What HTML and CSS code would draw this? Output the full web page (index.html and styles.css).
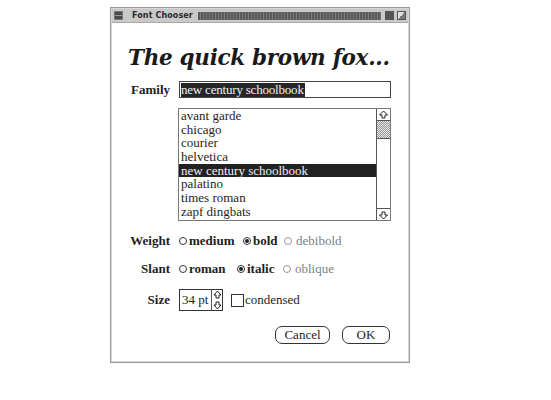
FILE: index.html
```html
<!DOCTYPE html>
<html>
<head>
<meta charset="utf-8">
<link rel="stylesheet" href="styles.css">
</head>
<body>
<div class="window">
  <div class="titlebar">
    <span class="tb-icon"></span>
    <span class="tb-title">Font Chooser</span>
    <span class="tb-stripe"></span>
    <span class="tb-btn tb-min"></span>
    <span class="tb-btn tb-max"></span>
  </div>
  <div class="content">
    <h1 class="sample">The quick brown fox...</h1>
    <div class="row family-row">
      <span class="label">Family</span>
      <div class="field"><span class="sel">new century schoolbook</span></div>
    </div>
    <div class="listbox">
      <ul class="items">
        <li>avant garde</li>
        <li>chicago</li>
        <li>courier</li>
        <li>helvetica</li>
        <li class="active">new century schoolbook</li>
        <li>palatino</li>
        <li>times roman</li>
        <li>zapf dingbats</li>
      </ul>
      <div class="scrollbar">
        <span class="arrow up"><svg width="11" height="10" viewBox="0 0 11 10"><path d="M5.5 1 L9.5 5 H7 V8 H4 V5 H1.5 Z" fill="none" stroke="#222" stroke-width="1"/></svg></span>
        <span class="thumb"></span>
        <span class="track"></span>
        <span class="arrow down"><svg width="11" height="10" viewBox="0 0 11 10"><path d="M5.5 9 L9.5 5 H7 V2 H4 V5 H1.5 Z" fill="none" stroke="#222" stroke-width="1"/></svg></span>
      </div>
    </div>
    <div class="row opt-row weight-row">
      <span class="label">Weight</span>
      <span class="opt opt-medium"><span class="radio"></span>medium</span>
      <span class="opt opt-bold"><span class="radio on"></span>bold</span>
      <span class="opt dim"><span class="radio"></span>debibold</span>
    </div>
    <div class="row opt-row slant-row">
      <span class="label">Slant</span>
      <span class="opt opt-roman"><span class="radio"></span>roman</span>
      <span class="opt opt-italic"><span class="radio on"></span>italic</span>
      <span class="opt dim"><span class="radio"></span>oblique</span>
    </div>
    <div class="row size-row">
      <span class="label">Size</span>
      <div class="sizebox">
        <span class="sizeval">34 pt</span>
        <span class="spin">
          <svg width="9" height="20" viewBox="0 0 9 20"><path d="M4.5 1 L8 5 H6 V8 H3 V5 H1 Z" fill="none" stroke="#222"/><path d="M4.5 19 L8 15 H6 V12 H3 V15 H1 Z" fill="none" stroke="#222"/></svg>
        </span>
      </div>
      <span class="check"></span><span class="checklabel">condensed</span>
    </div>
    <div class="buttons">
      <span class="btn cancel">Cancel</span>
      <span class="btn ok">OK</span>
    </div>
  </div>
</div>
</body>
</html>
```
FILE: styles.css
```css
html, body { margin: 0; padding: 0; background: #fff; }
body {
  width: 551px; height: 400px; overflow: hidden;
  font-family: "Liberation Serif", "DejaVu Serif", serif;
  color: #1e1e1e;
}
.window {
  margin: 7px 0 0 110px;
  width: 298px;
  height: 354px;
  border: 1px solid #9a9a9a;
  box-shadow: inset 0 0 0 1px #d6d6d6;
  display: flex; flex-direction: column;
}
.titlebar {
  height: 13px;
  margin: 1px 1px 0 1px;
  background: #c9c9c9;
  display: flex; align-items: center;
  border-bottom: 1px solid #a8a8a8;
}
.tb-icon {
  width: 9px; height: 9px; margin-left: 2px;
  background: #4a4a4a;
  box-shadow: inset 0 0 0 1px #777;
  background-image: linear-gradient(#4a4a4a 40%, #999 40%, #999 55%, #4a4a4a 55%);
}
.tb-title {
  font-family: "DejaVu Sans", sans-serif; font-weight: bold; font-size: 8px;
  color: #2a2a2a; margin-left: 9px; letter-spacing: 0.1px;
}
.tb-stripe {
  flex: 1; height: 8px; margin: 0 4px 0 5px;
  background: repeating-linear-gradient(90deg, #5a5a5a 0 2px, #777 2px 3px);
}
.tb-btn { width: 9px; height: 9px; margin-right: 3px; background: #e3e3e3; border: 1px solid #555; box-sizing: border-box; }
.tb-min { background: #555; }
.tb-max { margin-right: 2px; background: linear-gradient(135deg, #ddd 50%, #777 50%); }

.content { display: flex; flex-direction: column; }
.sample {
  margin: 22px 0 0 17px;
  font-family: "DejaVu Serif", serif; font-weight: bold; font-style: italic;
  font-size: 21.5px; line-height: 26px; letter-spacing: -0.3px;
  color: #1a1a1a; white-space: nowrap;
}
.row { display: flex; align-items: center; }
.label {
  width: 59px; text-align: right; font-weight: bold; font-size: 13px;
  padding-right: 9px; box-sizing: content-box;
}
.family-row { margin-top: 10px; height: 17px; }
.field {
  width: 209px; height: 15px; border: 1px solid #444;
  display: flex; align-items: center; padding-left: 1px;
  font-size: 13px;
}
.sel { background: #262626; color: #eee; line-height: 14px; padding-right: 1px; letter-spacing: -0.2px; }
.listbox {
  margin: 10px 0 0 67px; width: 211px; height: 111px;
  border: 1px solid #777; display: flex;
}
.items { list-style: none; margin: 0; padding: 0; flex: 1; font-size: 13px; line-height: 13.7px; }
.items li { padding-left: 2px; height: 13.7px; }
.items li.active { background: #222; color: #eee; }
.scrollbar { width: 13px; border-left: 1px solid #555; display: flex; flex-direction: column; }
.arrow { height: 11px; display: flex; align-items: center; justify-content: center; }
.arrow.up { border-bottom: 1px solid #555; }
.arrow.down { border-top: 1px solid #555; }
.thumb { height: 17px; background: repeating-conic-gradient(#999 0 25%, #e6e6e6 0 50%) 0 0 / 2px 2px; border-bottom: 1px solid #555; }
.track { flex: 1; background: #fff; }

.opt-row { font-size: 13px; font-weight: bold; }
.weight-row { margin-top: 12px; }
.slant-row { margin-top: 12px; }
.opt { display: flex; align-items: center; }
.radio {
  width: 6px; height: 6px; border: 1px solid #333; border-radius: 50%;
  margin-right: 2px; display: inline-block; position: relative;
}
.radio.on::after {
  content: ""; position: absolute; left: 1px; top: 1px; width: 4px; height: 4px; border-radius: 50%; background: #222;
}
.dim { color: #7a7f8a; font-weight: normal; }
.dim .radio { border-color: #999; margin-right: 4px; }
.opt-medium { width: 64px; }
.opt-bold { width: 41px; }
.opt-roman { width: 58px; }
.opt-italic { width: 46px; }

.size-row { margin-top: 12px; }
.sizebox { display: flex; border: 1px solid #333; height: 20px; }
.sizeval { font-size: 13px; padding: 0 0 0 2px; display: flex; align-items: center; border-right: 1px solid #555; width: 32px; white-space: nowrap; box-sizing: border-box; }
.spin { width: 10px; display: flex; align-items: center; justify-content: center; }
.check { width: 11px; height: 11px; border: 1px solid #333; margin-left: 8px; }
.checklabel { font-size: 13px; margin-left: 1px; }
.buttons { display: flex; justify-content: flex-end; margin: 15px 19px 0 0; gap: 12px; }
.btn {
  height: 16px; border: 1px solid #333; border-radius: 7px;
  display: flex; align-items: center; justify-content: center;
  font-size: 13px;
}
.cancel { width: 53px; }
.ok { width: 46px; }
```
